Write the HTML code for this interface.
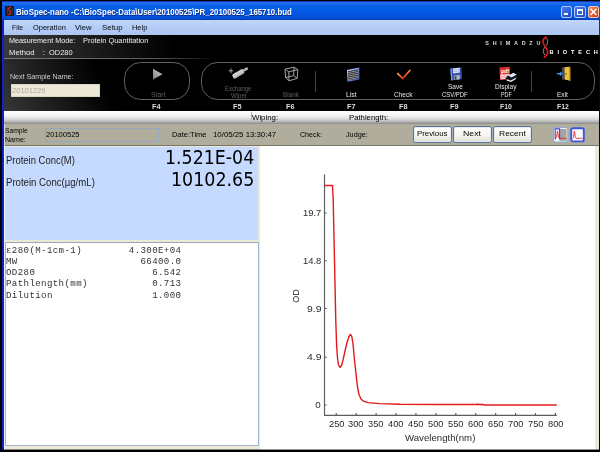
<!DOCTYPE html>
<html lang="en"><head><meta charset="utf-8"><title>BioSpec-nano</title>
<style>
html,body{margin:0;padding:0}
body{width:600px;height:452px;overflow:hidden;position:relative;background:#000;font-family:'Liberation Sans', sans-serif}
.a{position:absolute}
.t{position:absolute;white-space:pre;line-height:1;transform-origin:0 50%}
.btn{position:absolute;box-sizing:border-box;border:1px solid #5a7396;border-radius:2.5px;background:linear-gradient(#ffffff,#f6f5f0 55%,#e2dfd2);box-shadow:inset 0 0 0 1px #dfe8f6}
pre{margin:0}
</style></head><body>
<div class="a" style="left:0;top:1px;width:600px;height:449px;background:linear-gradient(90deg,#000 0,#000 1.5px,#0626d0 2px,#0626d0 100%)"></div>
<div class="a" style="left:1px;top:1px;width:599px;height:19px;background:linear-gradient(90deg,#000 0,#000 .5px,rgba(0,0,0,0) 1px),linear-gradient(#04289a 0,#2a70f0 9%,#0862ea 24%,#0358e2 60%,#0350da 86%,#023cbc 100%)"></div>
<svg class="a" style="left:5px;top:6px" width="9" height="10" viewBox="0 0 9 11" preserveAspectRatio="none"><rect width="9" height="11" fill="#221c1c"/><path d="M5.8 1.2C3.2 2.6 3 4 4.6 5.4S5.8 8.6 3.2 9.9" fill="none" stroke="#d81e1e" stroke-width="1.3"/><path d="M2.2 1.5C3.4 3.5 1.6 6 2.6 9.5M7 2c-.8 2 1 5-.3 7.6" fill="none" stroke="#555" stroke-width=".6"/></svg>
<div class="a" style="left:561px;top:6px;width:11px;height:12px;border-radius:2px;box-sizing:border-box;border:1px solid #b4c8f6;background:linear-gradient(135deg,#4a7cf0,#1c48c8)"></div>
<div class="a" style="left:564px;top:13px;width:4px;height:2px;background:#fff"></div>
<div class="a" style="left:574px;top:6px;width:12px;height:12px;border-radius:2px;box-sizing:border-box;border:1px solid #b4c8f6;background:linear-gradient(135deg,#4a7cf0,#1c48c8)"></div>
<div class="a" style="left:577px;top:9px;width:6px;height:6px;box-sizing:border-box;border:1px solid #fff;border-top-width:2px"></div>
<div class="a" style="left:588px;top:6px;width:11px;height:12px;border-radius:2px;box-sizing:border-box;border:1px solid #f0c8b8;background:linear-gradient(135deg,#f08860,#d03c10)"></div>
<svg class="a" style="left:588px;top:6px" width="11" height="12" viewBox="0 0 11 12"><path d="M2.6 2.8l5.8 6.2M8.4 2.8l-5.8 6.2" stroke="#fff" stroke-width="1.5" fill="none"/></svg>
<div class="a" style="left:4px;top:20px;width:595px;height:15px;background:linear-gradient(#c2d6f9,#b5ccf5 50%,#abc5f1)"></div>
<div class="a" style="left:4px;top:35px;width:595px;height:76px;background:#000"></div>
<div class="a" style="left:4px;top:35px;width:170px;height:23px;background:linear-gradient(90deg,#3a3a3a,#000)"></div>
<div class="a" style="left:4px;top:59px;width:128px;height:52px;background:linear-gradient(66deg,#363636,#000 74%)"></div>
<div class="a" style="left:4px;top:58px;width:215px;height:1px;background:linear-gradient(90deg,#7c7c7c,#5c5c5c 70%,#000)"></div>
<div class="a" style="left:11px;top:84px;width:89px;height:13px;background:#ece9d8;box-shadow:inset 0 0 0 .5px #c8c5b2"></div>
<div class="a" style="left:124px;top:62px;width:66px;height:38px;box-sizing:border-box;border:1px solid #626262;border-radius:16.5px"></div>
<div class="a" style="left:201px;top:62px;width:394px;height:38px;box-sizing:border-box;border:1px solid #626262;border-radius:16.5px"></div>
<div class="a" style="left:315px;top:71px;width:1px;height:21px;background:#404040"></div>
<div class="a" style="left:531px;top:71px;width:1px;height:21px;background:#404040"></div>
<svg class="a" style="left:152px;top:68px" width="12" height="13" viewBox="0 0 12 13"><defs><linearGradient id="pg" x1="0" y1="1" x2="1" y2="0"><stop offset="0" stop-color="#7c7c7c"/><stop offset="1" stop-color="#d2d2d2"/></linearGradient></defs><path d="M1 .8L10.4 6.2 1 11.6z" fill="url(#pg)"/></svg>
<svg class="a" style="left:227px;top:64px" width="24" height="18" viewBox="0 0 24 18"><path d="M4 4.4v4.8M1.6 6.8h4.8" stroke="#d8d8d8" stroke-width=".7" fill="none"/><g transform="translate(11.6 9.6) rotate(-31)"><rect x="-6.6" y="-2.4" width="12.4" height="4.8" rx="1.6" fill="#cfcfcf"/><rect x="5.4" y="-1.3" width="5.2" height="2.6" rx=".6" fill="#b4b4b4"/><rect x="-6.6" y=".6" width="12.4" height="1.8" rx=".9" fill="#a8a8a8" opacity=".6"/></g></svg>
<svg class="a" style="left:284px;top:66px" width="15" height="16" viewBox="0 0 15 16"><g fill="none" stroke="#a2a2a2" stroke-width="1"><path d="M1 3.2L10 1.2 13.8 3.6 13.2 12.4 5 14.8 1.6 11.6z"/><path d="M1 3.2L4.8 5.8 13.8 3.6M4.8 5.8L5 14.8M10 1.2L9.6 9.6 13.2 12.4M9.6 9.6L1.6 11.6"/></g></svg>
<svg class="a" style="left:346px;top:66px" width="15" height="17" viewBox="0 0 15 17"><defs><linearGradient id="lg" x1="0" y1="0" x2="1" y2="1"><stop offset="0" stop-color="#dfe8fb"/><stop offset=".45" stop-color="#7f9fe6"/><stop offset="1" stop-color="#2c4cae"/></linearGradient></defs><path d="M1 4L13.2 1.6 13.4 13.4 1.5 15.8z" fill="url(#lg)"/><path d="M2 5.2L12.3 3.2 12.4 12.4 2.3 14.4z" fill="#26262a"/><g stroke="#b4b4ba" stroke-width=".75"><path d="M2.1 6.6L12.3 4.6M2.1 8.4L12.3 6.4M2.2 10.2L12.4 8.2M2.2 12L12.4 10M2.3 13.6L12.4 11.6"/></g></svg>
<svg class="a" style="left:395px;top:68px" width="17" height="13" viewBox="0 0 17 13"><defs><linearGradient id="cg" x1="0" y1="0" x2="1" y2="0"><stop offset="0" stop-color="#ff9a2c"/><stop offset=".42" stop-color="#e6341a"/><stop offset="1" stop-color="#ff8a28"/></linearGradient></defs><path d="M2.8 5.6L7.7 10.5 14.8 2.5" fill="none" stroke="url(#cg)" stroke-width="1.8" stroke-linecap="round" stroke-linejoin="miter"/></svg>
<svg class="a" style="left:449px;top:66px" width="14" height="16" viewBox="0 0 14 16"><path d="M1.3 2.6L12.4 1.2 13 13 2.2 14.4z" fill="#3450ae"/><path d="M1.3 2.6L2.6 2.4 3.4 14.2 2.2 14.4z" fill="#8299e2"/><path d="M3.8 2.6L10.6 1.8 10.9 6.6 4.1 7.5z" fill="#dfe6f8"/><path d="M4 4.2l6.7-.8M4.1 5.8l6.7-.8" stroke="#8fa0d0" stroke-width=".6"/><path d="M4.8 9.8L10.6 9 10.9 13.2 5.1 14z" fill="#b9bcc8"/><path d="M5.6 10.4L7.4 10.2 7.6 13.4 5.8 13.7z" fill="#27356a"/></svg>
<svg class="a" style="left:498px;top:66px" width="20" height="17" viewBox="0 0 20 17"><path d="M1.4 1.5L11.8 .7 12 13.5 2 14z" fill="#de2f2f"/><path d="M2.3 8.6L11.2 8 11.3 12.8 2.6 13.2z" fill="#f7dede"/><path d="M3 10l7.6-.5M3.1 11.6l7.6-.5" stroke="#e79a9a" stroke-width=".7"/><text x="2.9" y="6.9" font-family="Liberation Sans, sans-serif" font-size="5.6" font-weight="bold" fill="#fff" textLength="8.2" lengthAdjust="spacingAndGlyphs">pdf</text><path d="M10.2 9.4L15.4 6.8 18.9 8.8 13.4 11.8z" fill="#d4e6fb"/><path d="M7.6 12L10.2 9.4 13.4 11.8 18.9 8.8 19 12.2 13 15.9 7.6 14.4z" fill="#16181e"/><path d="M8.6 13.3L12.9 14.5 17.8 11.7 17.9 12.9 13 15.9 8.6 14.6z" fill="#eef0f4"/></svg>
<svg class="a" style="left:556px;top:66px" width="15" height="16" viewBox="0 0 15 16"><path d="M5.8 1.4L12.6 1 12.8 13.4 6 13.4z" fill="#4a4a48"/><path d="M8.6 1.2L14.2 .8 14.3 14.8 8.8 13.6z" fill="#f1c43e"/><path d="M12.8 .9L14.2 .8 14.3 14.8 13 14.5z" fill="#c9962a"/><rect x="9.4" y="7.2" width="1.2" height="1.6" fill="#7a4a14"/><path d="M.8 6.9h3V5.2L7 7.7 3.8 10.2V8.5H.8z" fill="#3b8cec"/></svg>
<svg class="a" style="left:540px;top:35px" width="10" height="24" viewBox="0 0 10 24"><path d="M6 2.5C7.2 4 7.6 6 7.5 7.7 7.4 9.4 6.4 10.6 5.3 11.7M5 12C4 13.2 3.2 14.8 3.3 16.3 3.4 17.8 4.2 19.4 5 20.3" fill="none" stroke="#a8a8a8" stroke-width=".8"/><path d="M6 2C4 3.2 2.8 5 3 7 3.2 9 4.4 10.4 5.3 11.7 6.4 13.2 7.7 15 7.7 17 7.7 19.2 6.2 21 4.3 22.3" fill="none" stroke="#e8141c" stroke-width="1.6" stroke-linecap="round"/></svg>
<div class="a" style="left:4px;top:111px;width:595px;height:13px;background:linear-gradient(#fff 0,#f6f6f6 30%,#dedede 60%,#b2b2b2 84%,#868686 100%)"></div>
<div class="a" style="left:251px;top:112px;width:1px;height:11px;background:#b4b4b4"></div>
<div class="a" style="left:4px;top:124px;width:595px;height:22px;background:#b0ad9c"></div>
<div class="a" style="left:4px;top:145px;width:595px;height:1.3px;background:#77756a"></div>
<div class="a" style="left:4px;top:124px;width:1px;height:22px;background:#d8d6ca"></div>
<div class="a" style="left:45px;top:128px;width:114px;height:14px;box-sizing:border-box;border:1px solid #93a7be;background:#b0ad9c"></div>
<div class="btn" style="left:413px;top:126px;width:39px;height:17px"></div>
<div class="btn" style="left:453px;top:126px;width:39px;height:17px"></div>
<div class="btn" style="left:493px;top:126px;width:39px;height:17px"></div>
<svg class="a" style="left:553px;top:127px" width="16" height="16" viewBox="0 0 16 16"><rect x=".6" y=".6" width="14.2" height="14.4" rx="2" fill="#f6f8fc" stroke="#8ea6d0" stroke-width="1"/><rect x="6.6" y="2" width="7" height="12" fill="#a6a6a6"/><path d="M2.2 12.4V1.9H6.6V12.4" fill="none" stroke="#3a46d6" stroke-width="1.1"/><path d="M2 11.4C3.2 11.4 3.6 10.4 3.9 8 4.2 5.4 4.3 4.2 4.5 4.2S4.8 5.4 5.1 8C5.4 10.4 5.8 11.4 7 11.4H9.4L10 10.8 10.6 11.4H13.4" fill="none" stroke="#e8202a" stroke-width=".9"/></svg>
<svg class="a" style="left:570px;top:127px" width="16" height="16" viewBox="0 0 16 16"><rect x="1.2" y="1.2" width="12.6" height="13.2" rx="1.6" fill="#fafbff" stroke="#3f55dc" stroke-width="1.9"/><path d="M2.6 11.4C3.4 11.4 3.6 10.4 3.9 8 4.1 5.4 4.2 4.2 4.4 4.2S4.7 5.4 5 8C5.3 10.4 5.7 11.4 6.6 11.4H9.6L10.2 10.7 10.8 11.4H12.4" fill="none" stroke="#e8202a" stroke-width=".9"/></svg>
<div class="a" style="left:4px;top:146px;width:595px;height:304px;background:#ece9d8"></div>
<div class="a" style="left:4px;top:146px;width:1px;height:304px;background:#f4f4f0"></div>
<div class="a" style="left:5px;top:147px;width:252.7px;height:93.4px;background:#c6daff"></div>
<div class="a" style="left:5px;top:242px;width:254px;height:203.5px;box-sizing:border-box;border:1px solid #a3b6cf;border-top-color:#98a6b6;background:#fff"></div>
<pre class="a" style="left:6px;top:244.6px;font-family:'Liberation Mono', monospace;font-size:9.1px;letter-spacing:.39px;line-height:11.15px;color:#333;will-change:transform">ε280(M-1cm-1)        4.300E+04
MW                     66400.0
OD280                    6.542
Pathlength(mm)           0.713
Dilution                 1.000</pre>
<div class="a" style="left:260px;top:146px;width:334.5px;height:304px;background:linear-gradient(90deg,#f4f2e8 0,#fff .6px,#fff 100%)"></div>
<svg class="a" style="left:0;top:0" width="600" height="452" viewBox="0 0 600 452"><path d="M324.5 174.5V415.3H556.8" fill="none" stroke="#5c5c5c" stroke-width="1.15"/><path d="M324.5 213.02h2.2M324.5 260.77h2.2M324.5 308.52h2.2M324.5 357.25h2.2M324.5 405.00h2.2M336.25 415.3v-2.2M356.18 415.3v-2.2M376.10 415.3v-2.2M396.02 415.3v-2.2M415.95 415.3v-2.2M435.88 415.3v-2.2M455.80 415.3v-2.2M475.73 415.3v-2.2M495.65 415.3v-2.2M515.58 415.3v-2.2M535.50 415.3v-2.2M555.42 415.3v-2.2" fill="none" stroke="#5c5c5c" stroke-width="1.15"/><path d="M324.50 185.50 L332.50 185.50 L333.20 200.00 L334.50 260.00 L335.75 320.00 L336.60 345.00 L337.50 358.00 L338.50 365.00 L340.00 367.50 L341.50 365.50 L343.00 360.00 L345.00 351.00 L347.00 342.50 L349.00 336.50 L350.50 334.30 L351.80 336.50 L353.00 344.00 L354.50 360.00 L356.25 376.00 L357.50 387.00 L359.00 394.50 L361.00 399.00 L363.50 401.20 L368.00 402.60 L380.00 403.60 L400.00 404.20 L440.00 404.50 L476.50 404.50 L477.50 404.00 L478.50 404.90 L479.80 404.10 L481.00 404.90 L482.20 404.20 L483.20 404.80 L484.20 405.00 L556.70 405.00" fill="none" stroke="#e21a1a" stroke-width="1.4" stroke-linejoin="round"/></svg>
<div class="a" style="left:599px;top:35px;width:1px;height:415px;background:#0a0a0a"></div>
<div class="a" style="left:0;top:449px;width:600px;height:1px;background:rgba(0,0,0,.42)"></div>
<div id="tx" class="a" style="left:0;top:0;width:600px;height:452px;will-change:transform">
<span class="t" id="t0" style="left:15.70px;top:8.00px;font-size:8.5px;color:#fff;font-weight:bold;transform:scaleX(0.9253);text-shadow:0.5px 0.5px 0 #0a2a8a;">BioSpec-nano -C:\BioSpec-Data\User\20100525\PR_20100525_165710.bud</span>
<span class="t" id="t1" style="left:11.52px;top:23.69px;font-size:7.8px;color:#000814;transform:scaleX(0.8706);">File</span>
<span class="t" id="t2" style="left:32.73px;top:23.69px;font-size:7.8px;color:#000814;transform:scaleX(0.9575);">Operation</span>
<span class="t" id="t3" style="left:75.21px;top:23.69px;font-size:7.8px;color:#000814;transform:scaleX(0.9889);">View</span>
<span class="t" id="t4" style="left:101.95px;top:23.69px;font-size:7.8px;color:#000814;transform:scaleX(1.0104);">Setup</span>
<span class="t" id="t5" style="left:131.98px;top:23.69px;font-size:7.8px;color:#000814;transform:scaleX(0.9529);">Help</span>
<span class="t" id="t6" style="left:8.74px;top:37.09px;font-size:7.8px;color:#eeeeee;transform:scaleX(0.9265);">Measurement Mode:</span>
<span class="t" id="t7" style="left:82.73px;top:37.09px;font-size:7.8px;color:#eeeeee;transform:scaleX(0.9472);">Protein Quantitation</span>
<span class="t" id="t8" style="left:8.71px;top:48.59px;font-size:7.8px;color:#eeeeee;transform:scaleX(0.9830);">Method</span>
<span class="t" id="t9" style="left:42.81px;top:48.59px;font-size:7.8px;color:#eeeeee;">:</span>
<span class="t" id="t10" style="left:49.48px;top:48.59px;font-size:7.8px;color:#eeeeee;transform:scaleX(0.9523);">OD280</span>
<span class="t" id="t11" style="left:10.00px;top:72.99px;font-size:7.8px;color:#cfcfcf;transform:scaleX(0.9101);">Next Sample Name:</span>
<span class="t" id="t12" style="left:12.47px;top:86.79px;font-size:7.8px;color:#aca899;transform:scaleX(0.9669);">20101229</span>
<span class="t" id="t13" style="left:150.52px;top:91.63px;font-size:6.9px;color:#5e5e5e;transform:scaleX(0.9929);">Start</span>
<span class="t" id="t14" style="left:225.34px;top:85.53px;font-size:6.9px;color:#5e5e5e;transform:scaleX(0.8589);">Exchange</span>
<span class="t" id="t15" style="left:230.57px;top:92.63px;font-size:6.9px;color:#5e5e5e;transform:scaleX(0.8806);">Wiper</span>
<span class="t" id="t16" style="left:283.31px;top:91.83px;font-size:6.9px;color:#5e5e5e;transform:scaleX(0.9211);">Blank</span>
<span class="t" id="t17" style="left:345.52px;top:91.53px;font-size:6.9px;color:#e8e8e8;transform:scaleX(0.9981);">List</span>
<span class="t" id="t18" style="left:394.05px;top:91.53px;font-size:6.9px;color:#e8e8e8;transform:scaleX(0.9418);">Check</span>
<span class="t" id="t19" style="left:447.54px;top:83.53px;font-size:6.9px;color:#e8e8e8;transform:scaleX(0.9490);">Save</span>
<span class="t" id="t20" style="left:441.88px;top:91.53px;font-size:6.9px;color:#e8e8e8;transform:scaleX(0.8613);">CSV/PDF</span>
<span class="t" id="t21" style="left:495.29px;top:83.53px;font-size:6.9px;color:#e8e8e8;transform:scaleX(0.9479);">Display</span>
<span class="t" id="t22" style="left:500.87px;top:91.53px;font-size:6.9px;color:#e8e8e8;transform:scaleX(0.7794);">PDF</span>
<span class="t" id="t23" style="left:557.04px;top:91.53px;font-size:6.9px;color:#e8e8e8;transform:scaleX(0.9493);">Exit</span>
<span class="t" id="t24" style="left:152.24px;top:102.88px;font-size:7.2px;color:#dedede;font-weight:bold;transform:scaleX(1.0159);">F4</span>
<span class="t" id="t25" style="left:233.11px;top:102.88px;font-size:7.2px;color:#dedede;font-weight:bold;transform:scaleX(1.0159);">F5</span>
<span class="t" id="t26" style="left:286.11px;top:102.88px;font-size:7.2px;color:#dedede;font-weight:bold;transform:scaleX(1.0159);">F6</span>
<span class="t" id="t27" style="left:346.99px;top:102.88px;font-size:7.2px;color:#dedede;font-weight:bold;transform:scaleX(1.0159);">F7</span>
<span class="t" id="t28" style="left:398.99px;top:102.88px;font-size:7.2px;color:#dedede;font-weight:bold;transform:scaleX(1.0159);">F8</span>
<span class="t" id="t29" style="left:450.24px;top:102.88px;font-size:7.2px;color:#dedede;font-weight:bold;transform:scaleX(1.0159);">F9</span>
<span class="t" id="t30" style="left:500.07px;top:102.88px;font-size:7.2px;color:#dedede;font-weight:bold;transform:scaleX(0.9576);">F10</span>
<span class="t" id="t31" style="left:556.82px;top:102.88px;font-size:7.2px;color:#dedede;font-weight:bold;transform:scaleX(0.9576);">F12</span>
<span class="t" id="t32" style="left:485.22px;top:41.06px;font-size:5.4px;color:#dcdcdc;font-weight:bold;letter-spacing:3.815px;">SHIMADZU</span>
<span class="t" id="t33" style="left:549.61px;top:49.86px;font-size:5.6px;color:#ffffff;font-weight:bold;letter-spacing:3.835px;">BIOTECH</span>
<span class="t" id="t34" style="left:252.45px;top:114.39px;font-size:7.8px;color:#000;transform:scaleX(1.0037);">Wiping:</span>
<span class="t" id="t35" style="left:349.46px;top:114.39px;font-size:7.8px;color:#000;transform:scaleX(0.9906);">Pathlength:</span>
<span class="t" id="t36" style="left:4.73px;top:126.69px;font-size:7.4px;color:#000;transform:scaleX(0.9073);">Sample</span>
<span class="t" id="t37" style="left:4.71px;top:135.69px;font-size:7.4px;color:#000;transform:scaleX(0.9544);">Name:</span>
<span class="t" id="t38" style="left:45.72px;top:131.44px;font-size:7.9px;color:#000;transform:scaleX(0.9558);">20100525</span>
<span class="t" id="t39" style="left:171.97px;top:131.04px;font-size:7.9px;color:#000;transform:scaleX(0.9571);">Date:Time</span>
<span class="t" id="t40" style="left:213.20px;top:131.04px;font-size:7.9px;color:#000;transform:scaleX(0.9917);">10/05/25 13:30:47</span>
<span class="t" id="t41" style="left:299.50px;top:131.04px;font-size:7.9px;color:#000;transform:scaleX(0.8953);">Check:</span>
<span class="t" id="t42" style="left:346.24px;top:131.04px;font-size:7.9px;color:#000;transform:scaleX(0.9183);">Judge:</span>
<span class="t" id="t43" style="left:416.75px;top:130.39px;font-size:8px;color:#000;transform:scaleX(0.9798);">Previous</span>
<span class="t" id="t44" style="left:462.69px;top:130.39px;font-size:8px;color:#000;transform:scaleX(1.0891);">Next</span>
<span class="t" id="t45" style="left:498.71px;top:130.39px;font-size:8px;color:#000;transform:scaleX(1.0603);">Recent</span>
<span class="t" id="t46" style="left:6.34px;top:155.32px;font-size:10.6px;color:#222;transform:scaleX(0.8924);">Protein Conc(M)</span>
<span class="t" id="t47" style="left:6.33px;top:177.32px;font-size:10.6px;color:#222;transform:scaleX(0.9070);">Protein Conc(µg/mL)</span>
<span class="t" id="t48" style="left:165.48px;top:147.57px;font-size:19.8px;color:#000;font-family:'DejaVu Sans', 'Liberation Sans', sans-serif;transform:scaleX(0.8797);">1.521E-04</span>
<span class="t" id="t49" style="left:171.38px;top:169.87px;font-size:19.8px;color:#000;font-family:'DejaVu Sans', 'Liberation Sans', sans-serif;transform:scaleX(0.8830);">10102.65</span>
<span class="t" id="t50" style="left:302.84px;top:208.21px;font-size:9.8px;color:#2a2a2a;transform:scaleX(0.9601);">19.7</span>
<span class="t" id="t51" style="left:302.84px;top:255.96px;font-size:9.8px;color:#2a2a2a;transform:scaleX(0.9601);">14.8</span>
<span class="t" id="t52" style="left:306.77px;top:303.71px;font-size:9.8px;color:#2a2a2a;transform:scaleX(1.0610);">9.9</span>
<span class="t" id="t53" style="left:306.77px;top:352.21px;font-size:9.8px;color:#2a2a2a;transform:scaleX(1.0610);">4.9</span>
<span class="t" id="t54" style="left:315.27px;top:400.21px;font-size:9.8px;color:#2a2a2a;">0</span>
<span class="t" id="t55" style="left:328.50px;top:418.71px;font-size:9.8px;color:#2a2a2a;transform:scaleX(0.9475);">250</span>
<span class="t" id="t56" style="left:348.43px;top:418.71px;font-size:9.8px;color:#2a2a2a;transform:scaleX(0.9475);">300</span>
<span class="t" id="t57" style="left:368.35px;top:418.71px;font-size:9.8px;color:#2a2a2a;transform:scaleX(0.9475);">350</span>
<span class="t" id="t58" style="left:388.28px;top:418.71px;font-size:9.8px;color:#2a2a2a;transform:scaleX(0.9475);">400</span>
<span class="t" id="t59" style="left:408.20px;top:418.71px;font-size:9.8px;color:#2a2a2a;transform:scaleX(0.9475);">450</span>
<span class="t" id="t60" style="left:428.13px;top:418.71px;font-size:9.8px;color:#2a2a2a;transform:scaleX(0.9475);">500</span>
<span class="t" id="t61" style="left:448.05px;top:418.71px;font-size:9.8px;color:#2a2a2a;transform:scaleX(0.9475);">550</span>
<span class="t" id="t62" style="left:467.98px;top:418.71px;font-size:9.8px;color:#2a2a2a;transform:scaleX(0.9475);">600</span>
<span class="t" id="t63" style="left:487.90px;top:418.71px;font-size:9.8px;color:#2a2a2a;transform:scaleX(0.9475);">650</span>
<span class="t" id="t64" style="left:507.83px;top:418.71px;font-size:9.8px;color:#2a2a2a;transform:scaleX(0.9475);">700</span>
<span class="t" id="t65" style="left:527.75px;top:418.71px;font-size:9.8px;color:#2a2a2a;transform:scaleX(0.9475);">750</span>
<span class="t" id="t66" style="left:547.68px;top:418.71px;font-size:9.8px;color:#2a2a2a;transform:scaleX(0.9475);">800</span>
<span class="t" id="t67" style="left:404.83px;top:432.61px;font-size:9.8px;color:#2a2a2a;transform:scaleX(0.9837);">Wavelength(nm)</span>
<span class="t" style="left:295.6px;top:295.6px;font-size:9px;color:#222;line-height:1;transform:translate(-50%,-50%) rotate(-90deg);transform-origin:50% 50%">OD</span>
</div>
</body></html>
